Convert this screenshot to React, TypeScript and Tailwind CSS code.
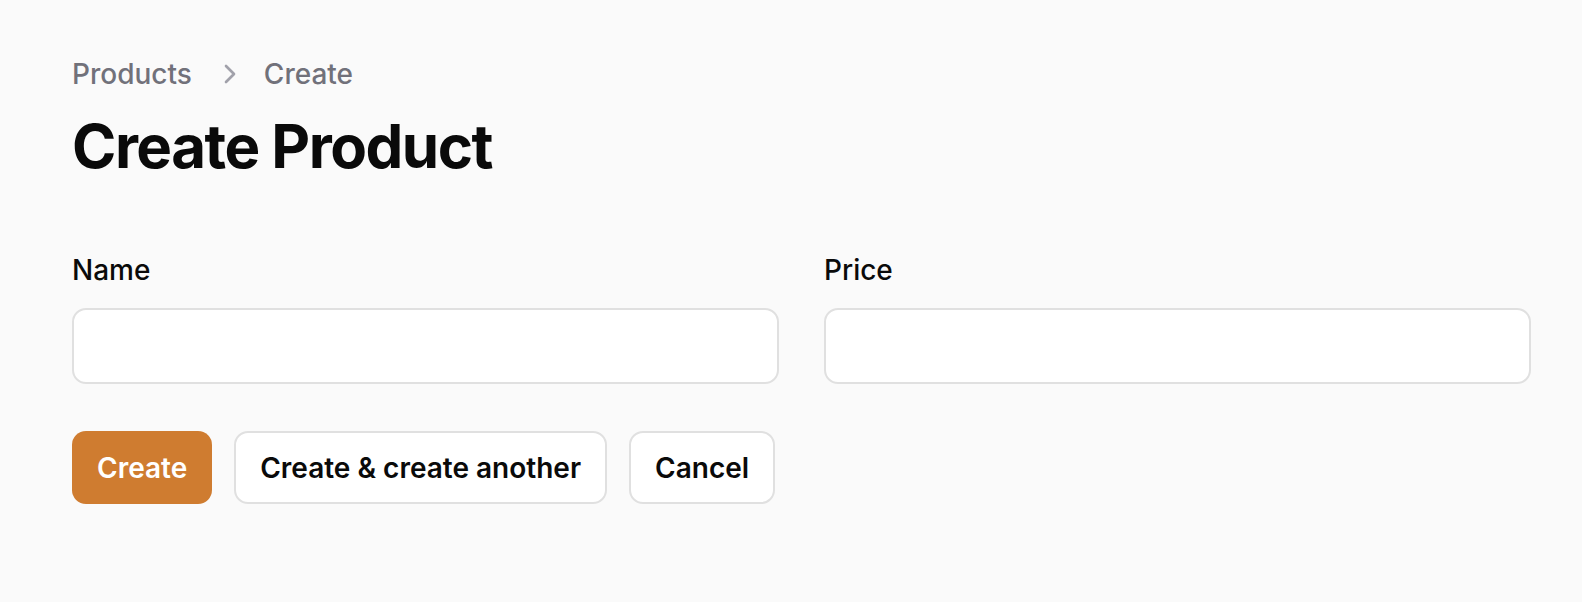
import { ChevronRight } from "lucide-react"

export default function App() {
  return (
    <div
      className="min-h-[602px] bg-[#fafafa] pl-[72px] pr-[51px] pt-[54px]"
      style={{ fontFamily: "Inter, 'Noto Sans', sans-serif" }}
    >
      <nav className="flex items-center text-[28px] leading-[40px] font-medium text-[#71717a]">
        <span>Products</span>
        <ChevronRight className="ml-[22px] mr-[18px] h-[32px] w-[32px] text-[#a1a1aa]" strokeWidth={2} />
        <span>Create</span>
      </nav>
      <h1 className="mt-[16px] text-[60px] font-bold leading-[72px] tracking-tight text-[#0a0a0a]">
        Create Product
      </h1>

      <form className="mt-[68px]">
        <div className="grid grid-cols-2 gap-[45px]">
          <div className="flex flex-col gap-[18px]">
            <label className="text-[28px] leading-[40px] font-medium text-[#0a0a0a]">Name</label>
            <input className="h-[76px] rounded-[14px] border-2 border-[#e0e0e0] bg-white px-4 outline-none" />
          </div>
          <div className="flex flex-col gap-[18px]">
            <label className="text-[28px] leading-[40px] font-medium text-[#0a0a0a]">Price</label>
            <input className="h-[76px] rounded-[14px] border-2 border-[#e0e0e0] bg-white px-4 outline-none" />
          </div>
        </div>

        <div className="mt-[47px] flex gap-[22px]">
          <button
            type="button"
            className="h-[73px] rounded-[14px] bg-[#cf7c30] px-[25px] text-[28px] font-semibold text-white"
          >
            Create
          </button>
          <button
            type="button"
            className="h-[73px] rounded-[14px] border-2 border-[#e0e0e0] bg-white px-[24px] text-[28px] font-semibold text-[#0a0a0a]"
          >
            Create &amp; create another
          </button>
          <button
            type="button"
            className="h-[73px] rounded-[14px] border-2 border-[#e0e0e0] bg-white px-[24px] text-[28px] font-semibold text-[#0a0a0a]"
          >
            Cancel
          </button>
        </div>
      </form>
    </div>
  )
}
